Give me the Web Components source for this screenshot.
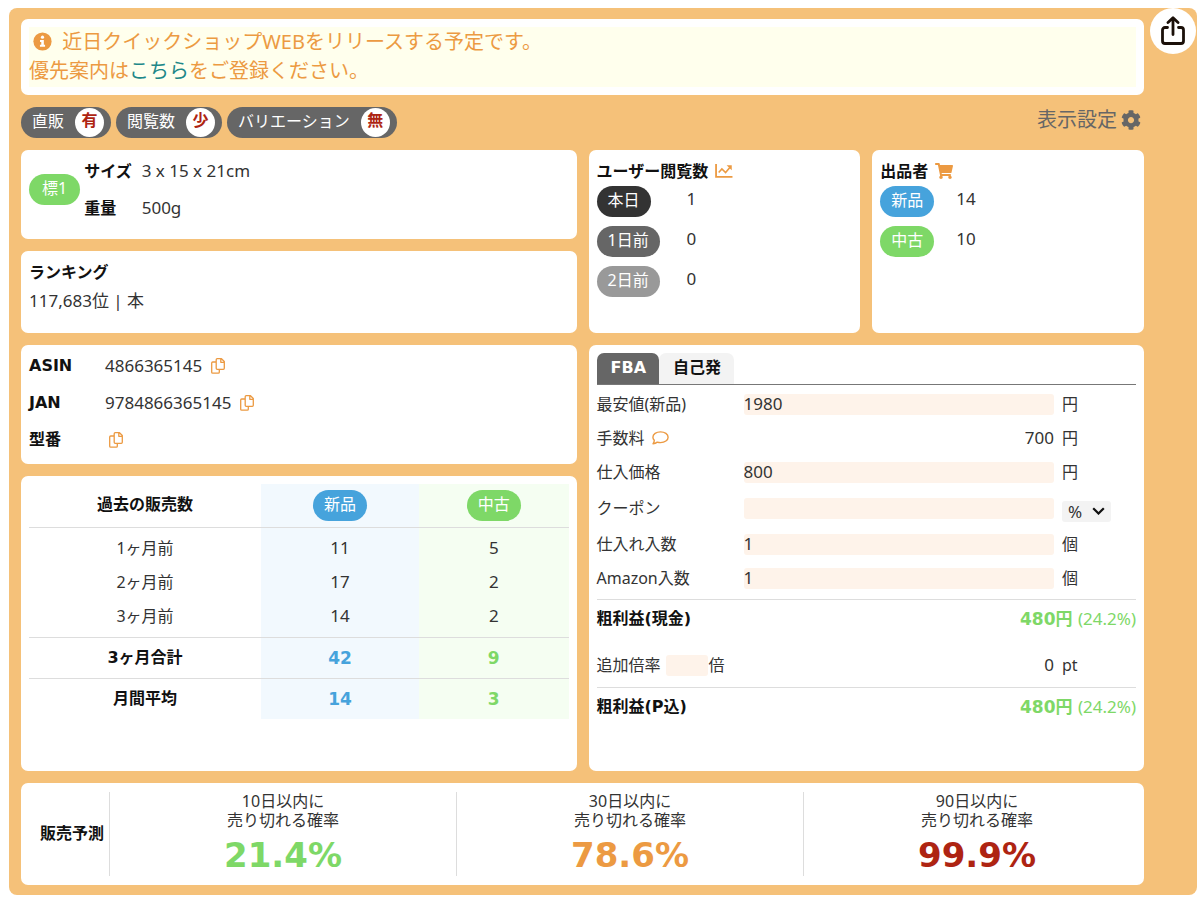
<!DOCTYPE html>
<html lang="ja">
<head>
<meta charset="utf-8">
<meta name="viewport" content="width=device-width, initial-scale=1">
<title>商品情報</title>
<style>
  :root {
    --orange: #ec9a42;
    --frame: #f5c179;
    --dark: #333;
    --gray: #666;
    --silver: #999;
    --blue: #46a3dc;
    --green: #7ed867;
    --red: #ae2412;
    --field: #fef3ea;
    --line: #ddd;
    --font-strong: "DejaVu Sans", "Noto Sans CJK JP", sans-serif;
  }
  body {
    margin: 0;
    background: #fff;
    color: #333;
    font: 16px/26px "Noto Sans", "Noto Sans CJK JP", sans-serif;
  }
</style>
</head>
<body>
<product-panel></product-panel>

<script>
const ICONS = {
  info: ['0 0 20 20', '<circle cx="10" cy="10" r="9.6" fill="currentColor"/><circle cx="10" cy="5.4" r="1.7" fill="#fff"/><path d="M7.4 8.5h4v5h1.3v2H7.3v-2h1.4v-3H7.4z" fill="#fff"/>'],
  gear: ['0 0 512 512', '<path fill="currentColor" d="M487.4 315.7l-42.600-24.600c4.300-23.200 4.300-47 0-70.200l42.600-24.600c4.900-2.800 7.100-8.600 5.500-14-11.100-35.600-30-67.800-54.700-94.600-3.800-4.100-10-5.100-14.800-2.300L380.800 110c-17.900-15.400-38.500-27.300-60.800-35.100V25.800c0-5.600-3.900-10.500-9.400-11.700-36.700-8.200-74.300-7.800-109.200 0-5.500 1.200-9.400 6.100-9.400 11.700V75c-22.200 7.900-42.800 19.800-60.800 35.100L88.700 85.500c-4.900-2.800-11-1.900-14.800 2.300-24.700 26.700-43.600 58.900-54.700 94.600-1.700 5.400.6 11.200 5.500 14L67.300 221c-4.300 23.200-4.300 47 0 70.200l-42.600 24.600c-4.900 2.800-7.100 8.600-5.500 14 11.100 35.600 30 67.800 54.700 94.600 3.800 4.100 10 5.100 14.800 2.300l42.600-24.600c17.900 15.400 38.500 27.300 60.800 35.100v49.200c0 5.600 3.900 10.500 9.400 11.700 36.700 8.200 74.300 7.800 109.200 0 5.500-1.200 9.400-6.100 9.400-11.700v-49.200c22.200-7.900 42.800-19.800 60.800-35.100l42.600 24.600c4.900 2.800 11 1.900 14.800-2.300 24.700-26.700 43.600-58.900 54.700-94.600 1.500-5.500-.7-11.300-5.600-14.100zM256 336c-44.100 0-80-35.900-80-80s35.900-80 80-80 80 35.900 80 80-35.900 80-80 80z"/>'],
  chart: ['0 0 17 14', '<path d="M1 .5V12.500h15.500" fill="none" stroke="currentColor" stroke-width="1.700"/><path d="M3.500 8.500l3-3.500 3.500 3.500 4-4.800" fill="none" stroke="currentColor" stroke-width="1.500"/><path d="M11 1.500h4.800v4.700z" fill="currentColor"/>'],
  cart: ['0 0 576 512', '<path fill="currentColor" d="M528.100 301.300l47.300-208C578.800 78.300 567.400 64 552 64H159.200l-9.200-44.800C147.800 8 137.900 0 126.500 0H24C10.700 0 0 10.700 0 24v16c0 13.300 10.700 24 24 24h69.900l70.200 343.400C147.300 417.100 136 435.200 136 456c0 30.900 25.100 56 56 56s56-25.100 56-56c0-15.700-6.400-29.800-16.800-40h209.600C430.400 426.200 424 440.300 424 456c0 30.900 25.100 56 56 56s56-25.100 56-56c0-22.200-12.900-41.300-31.600-50.400l5.500-24.300c3.400-15-8-29.300-23.400-29.300H218.100l-6.500-32h293.100c11.200 0 20.900-7.800 23.400-18.700z"/>'],
  copy: ['0 0 14 16', '<path d="M5.200 1.700a1 1 0 0 1 1-1h4.300l2.800 2.800v6.800a1 1 0 0 1-1 1H6.200a1 1 0 0 1-1-1zM9.800.9v3.400h3.400M5.200 4H1.700a1 1 0 0 0-1 1v9.200a1 1 0 0 0 1 1h5.600a1 1 0 0 0 1-1v-2.900" fill="none" stroke="currentColor" stroke-width="1.300" stroke-linejoin="round"/>'],
  comment: ['0 0 17 14', '<path d="M2.300 9.200C1.300 8.300.9 7.300.9 6.200.9 3.200 4.200.9 8.500.9s7.600 2.300 7.600 5.300-3.300 5.400-7.600 5.400c-1.100 0-2.200-.2-3.200-.5C4.200 12 2.700 12.700 1 12.800c.8-1.200 1.300-2.400 1.300-3.600z" fill="none" stroke="currentColor" stroke-width="1.400" stroke-linejoin="round"/>'],
  share: ['0 0 24 29', '<path d="M6.500 11.500H4a2.500 2.500 0 0 0-2.500 2.500v11A2.500 2.500 0 0 0 4 27.500h16a2.500 2.500 0 0 0 2.500-2.500V14a2.500 2.500 0 0 0-2.500-2.500h-2.500M12 18.500V3M7 6.500L12 1.800l5 4.700" fill="none" stroke="#1b1009" stroke-width="2.800" stroke-linecap="round" stroke-linejoin="round"/>'],
  chevron: ['0 0 13 8', '<path d="M1.200 1.200l5.300 5.300 5.300-5.300" fill="none" stroke="#111" stroke-width="2.200"/>']
};

function define(name, html, setup) {
  const template = document.createElement('template');
  template.innerHTML = html;
  customElements.define(name, class extends HTMLElement {
    constructor() {
      super();
      this.attachShadow({ mode: 'open' }).append(template.content.cloneNode(true));
    }
    connectedCallback() {
      if (setup) setup(this, this.shadowRoot);
    }
  });
}

define('ui-icon', `
  <style>
    :host { display: inline-block; width: 16px; height: 16px; color: var(--orange); }
    svg { display: block; width: 100%; height: 100%; }
  </style><svg aria-hidden="true"></svg>`, (host, root) => {
  const [box, body] = ICONS[host.getAttribute('name')];
  const svg = root.querySelector('svg');
  svg.setAttribute('viewBox', box);
  svg.innerHTML = body;
});

define('ui-card', `
  <style>
    :host { display: block; box-sizing: border-box; padding: 8px; background: #fff; border-radius: 7px; }
  </style><slot></slot>`);

define('ui-pill', `
  <style>
    :host { display: inline-block; padding: 1px 11px 4px; border-radius: 16px; color: #fff;
      background: var(--gray); font-size: 16px; line-height: 26px; white-space: nowrap; }
    :host([tone="dark"]) { background: var(--dark); }
    :host([tone="silver"]) { background: var(--silver); }
    :host([tone="blue"]) { background: var(--blue); }
    :host([tone="green"]) { background: var(--green); }
  </style><slot></slot>`);

define('status-flag', `
  <style>
    :host { display: inline-flex; align-items: center; gap: 11px; height: 31px; padding: 0 7px 0 11px;
      border-radius: 16px; background: var(--gray); color: #fff; line-height: 26px; white-space: nowrap; }
    b { width: 29px; height: 29px; border-radius: 50%; background: #fff; color: var(--red);
      text-align: center; line-height: 24px; }
    span { padding-bottom: 4px; }
  </style><span><slot></slot></span><b></b>`, (host, root) => {
  root.querySelector('b').textContent = host.getAttribute('value');
});

define('notice-card', `
  <style>
    :host { display: block; }
    p { margin: 0; padding-bottom: 2px; background: #ffffed; color: var(--orange); font-size: 20px; line-height: 29px; }
    ui-icon { width: 19px; height: 19px; margin: 0 5px 0 4px; vertical-align: -2px; }
    a { color: #208788; text-decoration: none; }
  </style>
  <ui-card><p><ui-icon name="info"></ui-icon> 近日クイックショップWEBをリリースする予定です。<br>優先案内は<a href="#register">こちら</a>をご登録ください。</p></ui-card>`);

define('tool-bar', `
  <style>
    :host { display: flex; align-items: center; gap: 5px; }
    button { display: flex; align-items: center; gap: 4px; margin-left: auto; padding: 0 3px 5px 0; border: 0;
      background: none; color: var(--gray); font: inherit; font-size: 20px; cursor: pointer; }
    ui-icon { width: 20px; height: 20px; color: var(--gray); }
  </style>
  <status-flag value="有">直販</status-flag>
  <status-flag value="少">閲覧数</status-flag>
  <status-flag value="無">バリエーション</status-flag>
  <button type="button">表示設定<ui-icon name="gear"></ui-icon></button>`);

define('size-card', `
  <style>
    :host { display: block; }
    .row { display: flex; align-items: center; gap: 4px; padding-bottom: 10px; }
    ui-pill { padding-left: 13px; padding-right: 13px; }
    dl { display: grid; grid-template-columns: auto 1fr; gap: 11px 10px; margin: 0; }
    dt { font-weight: bold; color: #111; }
    dd { margin: 0; font-size: 17px; }
  </style>
  <ui-card><div class="row"><ui-pill tone="green">標1</ui-pill>
    <dl><dt>サイズ</dt><dd>3 x 15 x 21cm</dd><dt>重量</dt><dd>500g</dd></dl></div></ui-card>`);

define('ranking-card', `
  <style>
    :host { display: block; }
    h2 { margin: 0 0 3px; font-size: 16px; line-height: 26px; color: #111; }
    p { margin: 0; padding-bottom: 11px; font-size: 17px; }
  </style>
  <ui-card><h2>ランキング</h2><p>117,683位 | 本</p></ui-card>`);

define('count-card', `
  <style>
    :host { display: block; }
    ui-card { height: 100%; }
    h2 { display: flex; align-items: center; gap: 7px; margin: 0 0 2px; font-size: 16px; line-height: 26px; color: #111; }
    ui-icon { width: 18px; }
  </style>
  <ui-card><h2></h2><slot></slot></ui-card>`, (host, root) => {
  const icon = document.createElement('ui-icon');
  icon.setAttribute('name', host.getAttribute('icon'));
  root.querySelector('h2').replaceChildren(host.getAttribute('heading'), icon);
});

define('count-list', `
  <style>
    :host { display: grid; grid-template-columns: var(--label-width, 76px) 1fr; row-gap: 9px; font-size: 17px; }
  </style><slot></slot>`);

define('code-card', `
  <style>
    :host { display: block; }
    dl { display: grid; grid-template-columns: 76px 1fr; row-gap: 11px; margin: 0; padding-bottom: 3px; }
    dt { font-family: var(--font-strong); font-weight: bold; color: #111; }
    dd { margin: 0; font-size: 17px; }
    button { padding: 0; border: 0; background: none; margin-left: 4px; vertical-align: -2px; cursor: pointer; line-height: 0; }
    ui-icon { width: 14px; height: 16px; }
  </style>
  <ui-card><dl>
    <dt>ASIN</dt><dd>4866365145 <button type="button" aria-label="ASINをコピー"><ui-icon name="copy"></ui-icon></button></dd>
    <dt>JAN</dt><dd>9784866365145 <button type="button" aria-label="JANをコピー"><ui-icon name="copy"></ui-icon></button></dd>
    <dt>型番</dt><dd><button type="button" aria-label="型番をコピー"><ui-icon name="copy"></ui-icon></button></dd>
  </dl></ui-card>`);

define('sales-card', `
  <style>
    :host { display: flex; flex-direction: column; }
    ui-card { flex: 1; }
    table { width: 100%; border-collapse: collapse; table-layout: fixed; text-align: center; }
    th, td { padding: 0; height: 34px; }
    td { font-size: 17px; }
    th { font-size: 16px; font-weight: normal; }
    th:nth-child(1) { width: 43%; }
    th:nth-child(2) { width: 158px; }
    th:nth-child(2), td:nth-child(2) { background: #f2f9fe; }
    th:nth-child(3), td:nth-child(3) { background: #f5fef2; }
    thead th { height: 43px; border-bottom: 1px solid var(--line); }
    thead th:first-child { font-weight: bold; color: #111; padding-bottom: 4px; height: 39px; }
    .first > * { padding-top: 3px; }
    .last > * { padding-bottom: 4px; }
    .sum > * { height: 40px; border-top: 1px solid var(--line); font-family: var(--font-strong); font-weight: bold; }
    .sum th { color: #111; }
    .sum td:nth-child(2) { color: var(--blue); }
    .sum td:nth-child(3) { color: var(--green); }
    ui-pill { vertical-align: middle; }
  </style>
  <ui-card><table>
    <thead><tr><th scope="col">過去の販売数</th><th scope="col"><ui-pill tone="blue">新品</ui-pill></th><th scope="col"><ui-pill tone="green">中古</ui-pill></th></tr></thead>
    <tbody>
      <tr class="first"><th scope="row">1ヶ月前</th><td>11</td><td>5</td></tr>
      <tr><th scope="row">2ヶ月前</th><td>17</td><td>2</td></tr>
      <tr class="last"><th scope="row">3ヶ月前</th><td>14</td><td>2</td></tr>
      <tr class="sum"><th scope="row">3ヶ月合計</th><td>42</td><td>9</td></tr>
      <tr class="sum"><th scope="row">月間平均</th><td>14</td><td>3</td></tr>
    </tbody>
  </table></ui-card>`);

define('profit-card', `
  <style>
    :host { display: block; }
    ui-card { height: 100%; }
    input, select, button { font: inherit; color: inherit; border: 0; margin: 0; border-radius: 3px; }
    .tabs { display: flex; border-bottom: 1px solid #777; margin-bottom: 2px; }
    .tabs button { padding: 2px 13px 3px 14px; border-radius: 7px 7px 0 0; background: #f3f3f3; color: #111;
      font-family: var(--font-strong); font-weight: bold; cursor: pointer; }
    .tabs button[aria-selected="true"] { background: var(--gray); color: #fff; }
    .row { display: grid; grid-template-columns: 147px 1fr 82px; align-items: center; min-height: 34px; }
    .row input { width: 100%; }
    input { box-sizing: border-box; height: 21px; padding: 0; background: var(--field); font-size: 17px; min-width: 0; }
    .unit { padding-left: 8px; }
    .coupon { min-height: 38px; }
    .num { font-size: 17px; text-align: right; }
    .pick { display: inline-grid; align-items: center; padding-top: 6px; vertical-align: top; }
    .pick > * { grid-area: 1 / 1; }
    select { appearance: none; width: 49px; height: 21px; padding: 0 0 0 6px; background: #f3f3f3; line-height: 21px; font-size: 17px; }
    .pick ui-icon { width: 13px; height: 8px; margin-right: 6px; justify-self: end; pointer-events: none; }
    .total { display: flex; justify-content: space-between; align-items: center; height: 38px; border-top: 1px solid var(--line);
      font-family: var(--font-strong); }
    h3 { margin: 0; font-size: 16px; color: #111; }
    .total p { margin: 0; color: var(--green); font-size: 17px; }
    .total small { font: 17px "Noto Sans", sans-serif; }
    .inputs { padding-bottom: 4px; }
    .extra { min-height: 44px; padding-top: 5px; }
    .extra .rate { display: flex; align-items: center; }
    .extra input { width: 42px; margin: 0 1px 0 5px; }
    .fee { display: flex; align-items: center; gap: 7px; }
    .fee ui-icon { width: 17px; height: 14px; }
  </style>
  <ui-card>
    <div class="tabs" role="tablist">
      <button type="button" role="tab" aria-selected="true">FBA</button><button type="button" role="tab" aria-selected="false">自己発</button>
    </div>
    <div class="inputs">
      <div class="row"><label for="price">最安値(新品)</label><input id="price" value="1980"><span class="unit">円</span></div>
      <div class="row"><span class="fee">手数料<ui-icon name="comment"></ui-icon></span><span class="num">700</span><span class="unit">円</span></div>
      <div class="row"><label for="cost">仕入価格</label><input id="cost" value="800"><span class="unit">円</span></div>
      <div class="row coupon"><label for="coupon">クーポン</label><input id="coupon"><span class="unit"><span class="pick"><select aria-label="クーポンの単位"><option>%</option><option>円</option></select><ui-icon name="chevron"></ui-icon></span></span></div>
      <div class="row"><label for="lot">仕入れ入数</label><input id="lot" value="1"><span class="unit">個</span></div>
      <div class="row"><label for="amazon">Amazon入数</label><input id="amazon" value="1"><span class="unit">個</span></div>
    </div>
    <div class="total"><h3>粗利益(現金)</h3><p><b>480円</b> <small>(24.2%)</small></p></div>
    <div class="row extra"><span class="rate"><label for="rate">追加倍率</label><input id="rate">倍</span><span class="num">0</span><span class="unit">pt</span></div>
    <div class="total"><h3>粗利益(P込)</h3><p><b>480円</b> <small>(24.2%)</small></p></div>
  </ui-card>`);

define('forecast-item', `
  <style>
    :host { display: block; flex: 1; border-left: 1px solid var(--line); text-align: center; }
    p { margin: 0; line-height: 19px; white-space: pre-line; }
    strong { display: block; margin-top: 4px; color: var(--tone); font: bold 34px/42px var(--font-strong); }
  </style><p></p><strong></strong>`, (host, root) => {
  root.querySelector('p').textContent = host.getAttribute('term') + '以内に\n売り切れる確率';
  root.querySelector('strong').textContent = host.getAttribute('value');
});

define('forecast-card', `
  <style>
    :host { display: block; }
    .row { display: flex; margin-right: -14px; padding: 1px 0; }
    h2 { flex: none; width: 80px; box-sizing: border-box; padding: 0 0 2px 11px; margin: 0; align-self: center; font-size: 16px; color: #111; white-space: nowrap; }
    forecast-item:nth-of-type(1) { --tone: var(--green); }
    forecast-item:nth-of-type(2) { --tone: var(--orange); }
    forecast-item:nth-of-type(3) { --tone: var(--red); }
  </style>
  <ui-card><div class="row"><h2>販売予測</h2>
    <forecast-item term="10日" value="21.4%"></forecast-item>
    <forecast-item term="30日" value="78.6%"></forecast-item>
    <forecast-item term="90日" value="99.9%"></forecast-item>
  </div></ui-card>`);

define('product-panel', `
  <style>
    :host { display: flex; gap: 6px; margin: 8px 3px 2px 9px; background: var(--frame); border-radius: 8px; }
    main { flex: 1; min-width: 0; display: flex; flex-direction: column; gap: 12px; padding: 11px 0 10px 12px; }
    .share { flex: none; display: grid; place-items: center; width: 46px; height: 46px; margin-right: 1px; padding: 0 0 2px;
      border: 0; border-radius: 50%; background: #fff; cursor: pointer; }
    .share ui-icon { width: 24px; height: 29px; }
    .split { display: grid; grid-template-columns: 1fr 1fr; gap: 12px; }
    .stack { display: flex; flex-direction: column; gap: 12px; }
    .stack.tall { min-height: 426px; }
    sales-card { flex: 1; }
    .views { --label-width: 90px; }
    ui-pill { justify-self: start; }
  </style>
  <main>
    <notice-card></notice-card>
    <tool-bar></tool-bar>
    <div class="split">
      <div class="stack"><size-card></size-card><ranking-card></ranking-card></div>
      <div class="split">
        <count-card heading="ユーザー閲覧数" icon="chart"><count-list class="views">
          <ui-pill tone="dark">本日</ui-pill><span>1</span>
          <ui-pill>1日前</ui-pill><span>0</span>
          <ui-pill tone="silver">2日前</ui-pill><span>0</span>
        </count-list></count-card>
        <count-card heading="出品者" icon="cart"><count-list>
          <ui-pill tone="blue">新品</ui-pill><span>14</span>
          <ui-pill tone="green">中古</ui-pill><span>10</span>
        </count-list></count-card>
      </div>
    </div>
    <div class="split">
      <div class="stack tall"><code-card></code-card><sales-card></sales-card></div>
      <profit-card></profit-card>
    </div>
    <forecast-card></forecast-card>
  </main>
  <button class="share" type="button" aria-label="共有"><ui-icon name="share"></ui-icon></button>`);
</script>
</body>
</html>
